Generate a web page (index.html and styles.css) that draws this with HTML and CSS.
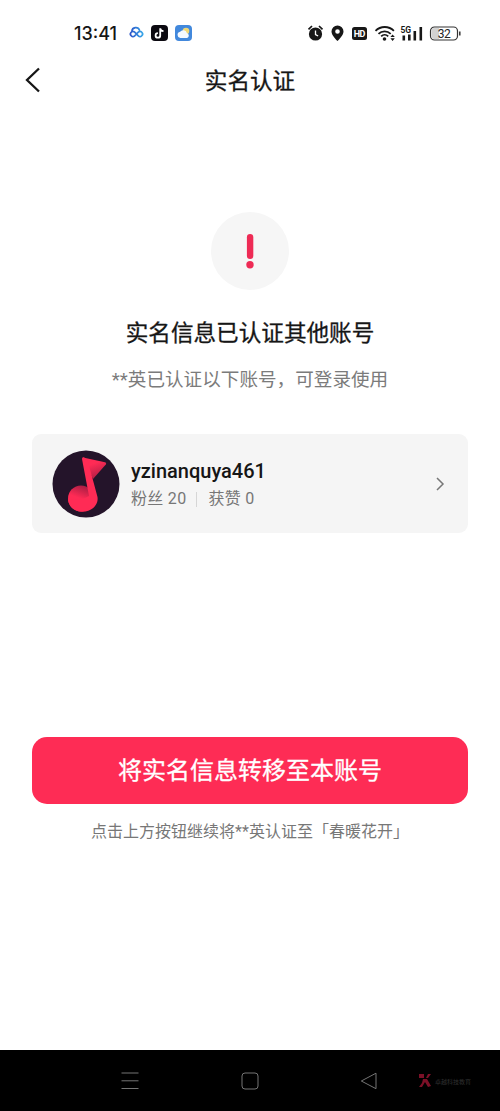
FILE: index.html
```html
<!DOCTYPE html>
<html lang="zh-CN">
<head>
<meta charset="utf-8">
<title>实名认证</title>
<link rel="stylesheet" href="styles.css">
</head>
<body>
<div class="screen">
  <header class="status">
    <span class="time">13:41</span>
    <svg class="apps" width="58" height="18" viewBox="0 0 58 18">
      <defs><linearGradient id="cloud" x1="0" x2="1"><stop offset="0" stop-color="#2c55c8"/><stop offset="1" stop-color="#35a4e8"/></linearGradient></defs>
      <path d="M2.900 7.300A3.900 3.900 0 0 1 10.500 6.300M7 10.500l-1.300 1.300a2.500 2.500 0 1 1 0-3.600l3.600 3.600a2.500 2.500 0 1 0 0-3.600L7.800 9.700" fill="none" stroke="url(#cloud)" stroke-width="1.700" stroke-linecap="round"/>
      <rect x="22" y="1" width="17" height="16" rx="4" fill="#0b0910"/>
      <path d="M31.200 4.300v7.100a2.300 2.300 0 1 1-2.300-2.300M31.200 4.300c.3 1.800 1.400 2.800 3.300 2.900" fill="none" stroke="#fff" stroke-width="1.800"/>
      <rect x="46" y="1" width="17" height="16" rx="4" fill="#4288dc"/>
      <circle cx="57" cy="7" r="3.300" fill="#f0d878"/>
      <path d="M51.300 14a3.200 3.200 0 0 1-.2-6.300 3.900 3.900 0 0 1 6.800 1.200 2.700 2.700 0 0 1 .2 5.100z" fill="#f4f9ff"/>
    </svg>
    <svg class="indicators" width="156" height="20" viewBox="0 0 156 20">
      <g fill="#171717">
        <circle cx="8.500" cy="11" r="6.600"/>
        <path d="M8.500 7.500v4l2.600 1.500" fill="none" stroke="#fff" stroke-width="1.300"/>
        <path d="M1.500 6.300 5 3M15.500 6.300 12 3" stroke="#171717" stroke-width="1.700"/>
        <path fill-rule="evenodd" d="M30.500 2.500a6 6 0 0 0-6 6c0 3.600 4 7.500 6 9.500 2-2 6-5.900 6-9.500a6 6 0 0 0-6-6zm0 3.700a2.300 2.300 0 1 1 0 4.600 2.300 2.300 0 0 1 0-4.600z"/>
        <rect x="45" y="4" width="15" height="13" rx="2.500"/>
        <circle cx="77.500" cy="16" r="1.800"/>
        <path d="M68.500 7.800a13 13 0 0 1 18.400 0M71.500 10.800a8.700 8.700 0 0 1 12.200 0M74.200 13.300a5 5 0 0 1 7 0" fill="none" stroke="#171717" stroke-width="1.800"/>
        <path d="m83.400 14.100 2.200-2.600 2.200 2.600zM83.400 15.300l2.200 2.600 2.200-2.600z"/>
        <path d="M95.500 12.500h2.600v5h-2.600zM101 11.500h2.600v6H101zM106.500 8h2.600v9.500h-2.600zM112.500 4h2.600v13.500h-2.600z"/>
      </g>
      <text class="hd" x="46.700" y="14.200" textLength="11.600">HD</text>
      <text class="net" x="93.500" y="9.500" textLength="10.500">5G</text>
      <rect x="123.500" y="4" width="27" height="13" rx="4" fill="#fff" stroke="#333" stroke-width="1.200"/>
      <path d="M127.500 5h4.500v11h-4.500a3 3 0 0 1-3-3V8a3 3 0 0 1 3-3z" fill="#d2d2d2"/>
      <path d="M152.800 8.500v4" stroke="#333" stroke-width="1.500"/>
      <text class="level" x="130.700" y="14.600" textLength="13">32</text>
    </svg>
  </header>
  <nav class="titlebar">
    <svg class="back" width="18" height="28" viewBox="0 0 18 28"><path d="M15 2.500 3 14 15 25.500" fill="none" stroke="#161616" stroke-width="2.300"/></svg>
    <h1>实名认证</h1>
  </nav>
  <main>
    <div class="alert"><svg width="10" height="36" viewBox="0 0 10 36"><rect x="1.900" y="1" width="6.400" height="25" rx="3.200" fill="#ee2b55"/><circle cx="5" cy="31.800" r="3.700" fill="#ee2b55"/></svg></div>
    <h2>实名信息已认证其他账号</h2>
    <p class="sub">**英已认证以下账号，可登录使用</p>
    <section class="account">
      <svg class="avatar" width="68" height="68" viewBox="0 0 68 68">
        <defs>
          <linearGradient id="flag" x1=".3" x2=".7" y1="0" y2="1"><stop offset=".3" stop-color="#ff2b55"/><stop offset="1" stop-color="#a91d43"/></linearGradient>
          <linearGradient id="head" x1=".3" x2=".6" y1=".8" y2="0"><stop offset=".4" stop-color="#ff2b55"/><stop offset="1" stop-color="#a91d43"/></linearGradient>
        </defs>
        <circle cx="34" cy="34" r="33.500" fill="#24142a"/>
        <path d="M31 7.500 53 12.300q2 .6.800 2.200L41 29z" fill="url(#flag)"/>
        <circle cx="29" cy="48.500" r="13" fill="url(#head)"/>
        <path d="M30 9q0-2.500 2.200-1.500l3.300 2.200L45.500 47c1.300 8.500-6.500 15-15.500 14.800C22 61.500 16.500 56 16 49q10 3 21-3z" fill="#ff2b55"/>
      </svg>
      <div class="info">
        <div class="name">yzinanquya461</div>
        <div class="stats"><span>粉丝 20</span><i></i><span>获赞 0</span></div>
      </div>
      <svg class="chevron" width="10" height="16" viewBox="0 0 10 16"><path d="m2 2 6 6-6 6" fill="none" stroke="#777" stroke-width="1.500"/></svg>
    </section>
    <button class="transfer">将实名信息转移至本账号</button>
    <p class="hint">点击上方按钮继续将**英认证至「春暖花开」</p>
  </main>
  <footer class="sysnav">
    <svg width="18" height="18" viewBox="0 0 18 18"><path d="M.5 1h17M.5 8.800h17M.5 16.500h17" stroke="#747474"/></svg>
    <svg width="18" height="18" viewBox="0 0 18 18"><rect x="1" y="1" width="16" height="16" rx="3" fill="none" stroke="#747474"/></svg>
    <svg width="18" height="18" viewBox="0 0 18 18"><path d="M16 1.200v15.500L1.300 9z" fill="none" stroke="#747474" stroke-linejoin="round"/></svg>
    <div class="mark">
      <svg width="14" height="15" viewBox="0 0 14 15"><path d="M1 1h5v4H1zM8 5l2-4h3l-3 4zM5 6h4l4 7-3 1-3-5-3 5H1l3-4z" fill="#7c1027"/></svg>
      <span>卓越科技教育</span>
    </div>
  </footer>
</div>
</body>
</html>
```
FILE: styles.css
```css
* { box-sizing: border-box; }
body { margin: 0; background: #fff; font-family: Roboto, "Noto Sans CJK SC", sans-serif; color: #161616; }
h1, h2, p { margin: 0; font-weight: 400; white-space: nowrap; }
h1, h2 { -webkit-text-stroke: .3px currentColor; }
svg { display: block; flex: none; }
.screen { width: 500px; height: 1111px; display: flex; flex-direction: column; }
.status { height: 50px; padding: 16px 37px 0 74px; display: flex; align-items: center; flex: none; }
.time { font: 500 18px/24px Inter, sans-serif; width: 43px; padding-top: 1px; }
.apps { margin-left: 12px; overflow: visible; }
.indicators { margin-left: auto; }
.hd { font: 700 9px Roboto, sans-serif; fill: #fff; }
.net { font: 700 8.5px Roboto, sans-serif; fill: #171717; }
.level { font: 400 12px Roboto, sans-serif; fill: #222; }
.titlebar { height: 60px; padding: 0 24px; display: grid; grid-template-columns: 18px 1fr 18px; align-items: center; flex: none; }
h1 { padding-top: 3px; font-size: 22.6px; line-height: 32px; text-align: center; }
main { flex: 1; padding: 102px 32px 0; display: flex; flex-direction: column; align-items: center; }
.alert { width: 78px; height: 78px; border-radius: 50%; background: #f6f6f6; display: flex; align-items: center; justify-content: center; flex: none; }
h2 { margin-top: 28px; font-size: 22.6px; line-height: 32px; }
.sub { margin-top: 16px; font-size: 18.6px; line-height: 28px; font-weight: 400; color: #7b7b7b; }
.account { width: 436px; height: 99px; margin-top: 40px; padding: 0 23px 0 20px; border-radius: 9px; background: #f5f5f5; display: flex; align-items: center; flex: none; }
.info { margin-left: 11px; padding-top: 3px; }
.name { font-size: 20px; line-height: 26px; font-weight: 500; }
.stats { margin-top: 2px; display: flex; align-items: center; font-size: 16px; letter-spacing: .3px; line-height: 26px; color: #777; }
.stats i { width: 1px; height: 15px; margin: 0 11px 0 10px; background: #d6d6d6; }
.chevron { margin-left: auto; }
.transfer { width: 436px; height: 67px; margin-top: 204px; padding: 0 0 3px; border: 0; border-radius: 15px; background: #fe2c55; color: #fff; font: 400 24px/32px "Noto Sans CJK SC", sans-serif; -webkit-text-stroke: .3px currentColor; flex: none; }
.hint { margin-top: 16px; font-size: 16px; line-height: 24px; font-weight: 400; color: #777; }
.sysnav { height: 61px; padding-left: 121px; background: #000; display: flex; align-items: center; flex: none; }
.sysnav > svg + svg { margin-left: 101.500px; }
.mark { margin-left: 40px; display: flex; align-items: center; gap: 3px; }
.mark span { padding-top: 3px; font-size: 6px; line-height: 10px; color: #303030; white-space: nowrap; }
```
